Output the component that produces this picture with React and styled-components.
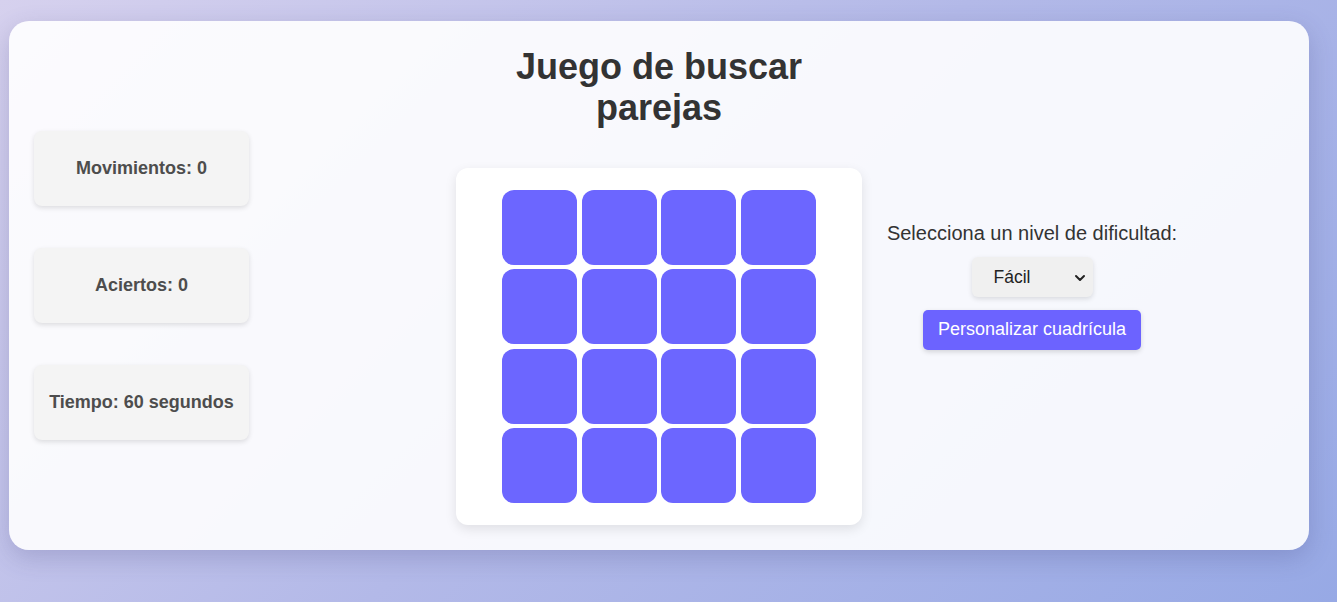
import React from "react";
import styled, { createGlobalStyle } from "styled-components";
import { ChevronDown } from "lucide-react";

const GlobalStyle = createGlobalStyle`
  html, body { margin: 0; padding: 0; }
  body {
    font-family: "Liberation Sans", Arial, sans-serif;
    min-height: 100vh;
    background: linear-gradient(135deg, #d6d1ee 0%, #b3b9e8 50%, #97a9e5 100%);
  }
`;

const Page = styled.div`
  box-sizing: border-box;
  min-height: 602px;
  padding: 21px 28px 0 9px;
`;

const Card = styled.main`
  box-sizing: border-box;
  width: 1300px;
  height: 529px;
  padding: 0 25px;
  display: flex;
  align-items: center;
  background: rgba(255, 255, 255, 0.9);
  border-radius: 20px;
  box-shadow: 0 8px 24px rgba(60, 60, 120, 0.22);
`;

const StatsColumn = styled.aside`
  width: 215px;
  display: flex;
  flex-direction: column;
  gap: 42px;
`;

const StatBox = styled.div`
  height: 75px;
  display: flex;
  align-items: center;
  justify-content: center;
  background: #f4f4f4;
  border-radius: 8px;
  box-shadow: 0 2px 5px rgba(0, 0, 0, 0.12);
  font-size: 18px;
  font-weight: 700;
  color: #4d4d4d;
`;

const CenterColumn = styled.section`
  width: 406px;
  margin-left: 207px;
  display: flex;
  flex-direction: column;
  align-items: center;
`;

const Title = styled.h1`
  margin: 0 0 40px;
  font-size: 36px;
  font-weight: 700;
  color: #333;
  text-align: center;
  line-height: 41px;
`;

const Board = styled.div`
  box-sizing: border-box;
  width: 406px;
  height: 357px;
  padding: 22px 0;
  background: #fff;
  border-radius: 12px;
  box-shadow: 0 4px 12px rgba(0, 0, 0, 0.1);
  display: grid;
  grid-template-columns: repeat(4, 75px);
  grid-auto-rows: 75px;
  column-gap: 4.67px;
  row-gap: 4.33px;
  justify-content: center;
`;

const Tile = styled.div`
  background: #6c66ff;
  border-radius: 12px;
`;

const ControlsColumn = styled.section`
  width: 290px;
  margin-left: 25px;
  display: flex;
  flex-direction: column;
  align-items: center;
`;

const Label = styled.label`
  font-size: 20px;
  color: #333;
  white-space: nowrap;
  line-height: 23px;
`;

const SelectWrap = styled.div`
  position: relative;
  margin-top: 12px;
`;

const Select = styled.select`
  appearance: none;
  -webkit-appearance: none;
  width: 121px;
  height: 40px;
  padding: 0 0 0 22px;
  border: none;
  border-radius: 6px;
  background: #f0f0f0;
  box-shadow: 0 2px 5px rgba(0, 0, 0, 0.12);
  font-family: "Liberation Sans", Arial, sans-serif;
  font-size: 17.5px;
  color: #222;
  outline: none;
`;

const Chevron = styled(ChevronDown)`
  position: absolute;
  right: 5px;
  top: 13px;
  pointer-events: none;
  color: #222;
`;

const Button = styled.button`
  margin-top: 13px;
  height: 40px;
  padding: 0 15px;
  border: none;
  border-radius: 5px;
  background: #6c63ff;
  color: #fff;
  font-family: "Liberation Sans", Arial, sans-serif;
  font-size: 18px;
  box-shadow: 0 2px 5px rgba(0, 0, 0, 0.15);
  cursor: pointer;
`;

export default function App() {
  const tiles = Array.from({ length: 16 }, (_, i) => i);
  return (
    <>
      <GlobalStyle />
      <Page>
        <Card>
          <StatsColumn>
            <StatBox>Movimientos: 0</StatBox>
            <StatBox>Aciertos: 0</StatBox>
            <StatBox>Tiempo: 60 segundos</StatBox>
          </StatsColumn>
          <CenterColumn>
            <Title>Juego de buscar parejas</Title>
            <Board>
              {tiles.map((t) => (
                <Tile key={t} />
              ))}
            </Board>
          </CenterColumn>
          <ControlsColumn>
            <Label htmlFor="nivel">Selecciona un nivel de dificultad:</Label>
            <SelectWrap>
              <Select id="nivel" defaultValue="facil">
                <option value="facil">Fácil</option>
                <option value="medio">Medio</option>
                <option value="dificil">Difícil</option>
              </Select>
              <Chevron size={16} strokeWidth={3} />
            </SelectWrap>
            <Button>Personalizar cuadrícula</Button>
          </ControlsColumn>
        </Card>
      </Page>
    </>
  );
}
